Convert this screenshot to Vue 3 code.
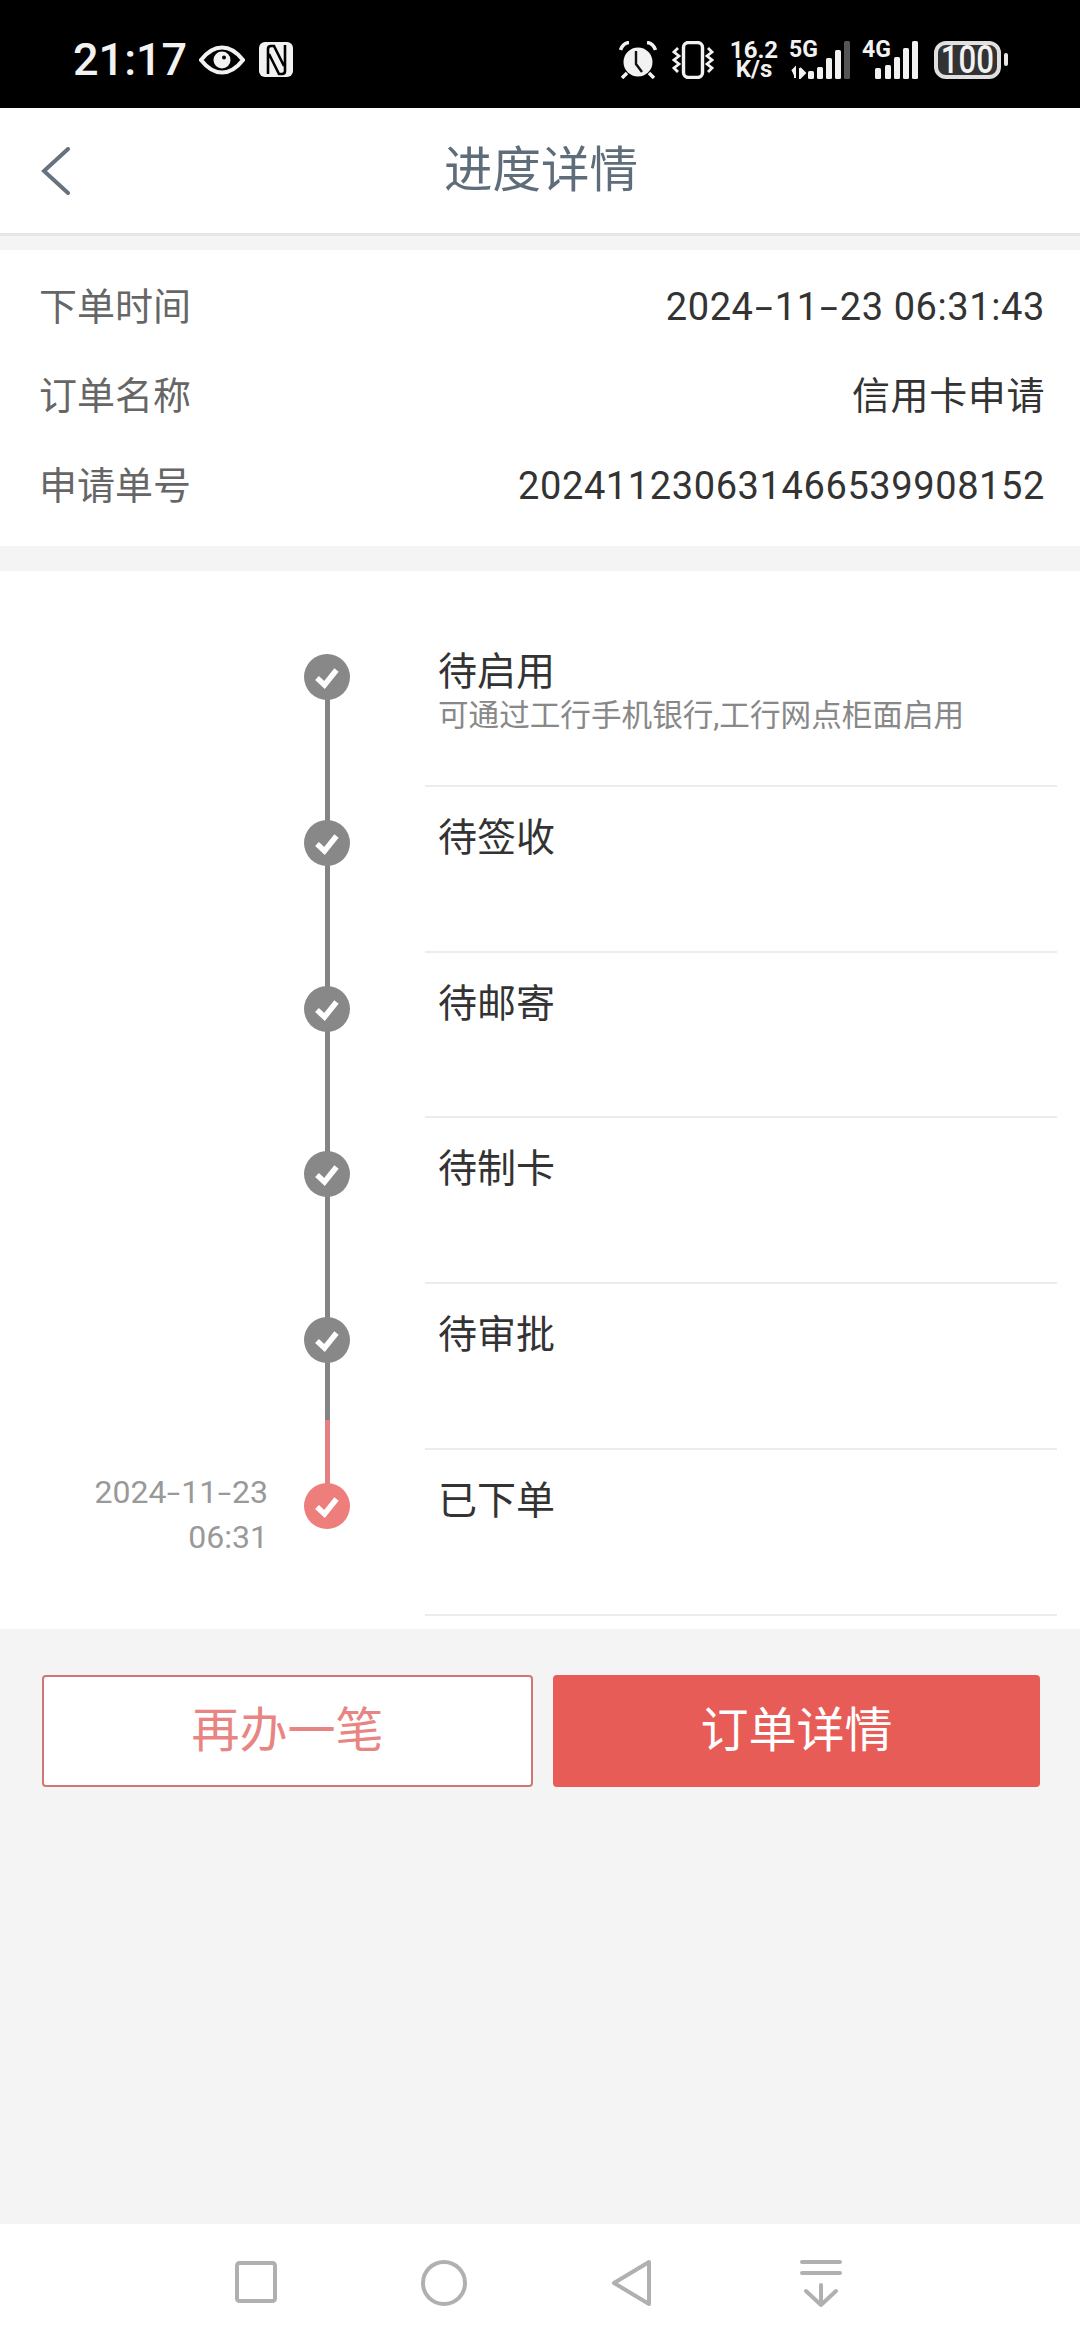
<script setup>
const rows = [
  { title: '待启用', sub: '可通过工行手机银行,工行网点柜面启用' },
  { title: '待签收' },
  { title: '待邮寄' },
  { title: '待制卡' },
  { title: '待审批' },
  { title: '已下单', date: ['2024', '11', '23'], time: '06:31', active: true },
]
const info = [
  { label: '下单时间', parts: ['2024', '11', '23 06:31:43'] },
  { label: '订单名称', parts: ['信用卡申请'] },
  { label: '申请单号', parts: ['202411230631466539908152'] },
]
</script>

<template>
  <div class="page">
    <div class="status">
      <div class="st-left">
        <span class="clock">21:17</span>
        <svg class="eye" width="46" height="30" viewBox="0 0 46 30">
          <path d="M2 15C9 6 15 2.5 23 2.5S37 6 44 15c-7 9-13 12.5-21 12.5S9 24 2 15z" fill="none" stroke="#f2f2f2" stroke-width="4"/>
          <circle cx="23" cy="15" r="8.5" fill="#f2f2f2"/><circle cx="25" cy="12.5" r="2" fill="#000"/>
        </svg>
        <svg class="nfc" width="34" height="35" viewBox="0 0 34 35">
          <rect width="34" height="35" rx="6" fill="#f2f2f2"/>
          <path d="M9 32V7q0-3 3-3h3l10 20M26 3v26q0 3-3 3h-3L10 12" fill="none" stroke="#000" stroke-width="2.6"/>
        </svg>
      </div>
      <div class="st-right">
        <svg width="38" height="38" viewBox="0 0 38 38">
          <circle cx="19" cy="21" r="14.5" fill="#f2f2f2"/>
          <path d="M1.5 9Q4 2 10 1.5M28 1.5Q34 2 36.5 9M8 32l-5 5M30 32l5 5" fill="none" stroke="#f2f2f2" stroke-width="3.5"/>
          <path d="M17 10v13l6 8" fill="none" stroke="#111" stroke-width="2.4"/>
        </svg>
        <svg class="vib" width="42" height="38" viewBox="0 0 42 38">
          <rect x="11.5" y="1.5" width="19" height="35" rx="5" fill="none" stroke="#f2f2f2" stroke-width="3.4"/>
          <path d="M6 7 2 11l5 4-5 4 5 4-5 4 4 4M36 7l4 4-5 4 5 4-5 4 5 4-4 4" fill="none" stroke="#f2f2f2" stroke-width="2.8"/>
        </svg>
        <div class="speed"><div class="sp-line">16.2</div><div class="sp-line">K/s</div></div>
        <div class="sim sim5">
          <span class="gen">5G</span>
          <svg width="61" height="38" viewBox="0 0 61 38" class="bars">
            <path d="M6 27v10M3 30l3-3v10M11 27v10l5-5-5-5" fill="#f2f2f2" stroke="#f2f2f2" stroke-width="2"/>
            <rect x="19" y="30" width="6" height="8" rx="1.5" fill="#f2f2f2"/><rect x="28" y="26" width="6" height="12" rx="1.5" fill="#f2f2f2"/><rect x="37" y="17" width="6" height="21" rx="1.5" fill="#f2f2f2"/><rect x="46" y="9" width="6" height="29" rx="1.5" fill="#f2f2f2"/><rect x="55" y="0" width="6" height="38" rx="1.5" fill="#555"/>
          </svg>
        </div>
        <div class="sim sim4">
          <span class="gen">4G</span>
          <svg width="56" height="38" viewBox="0 0 56 38" class="bars">
            <rect x="13" y="27" width="6" height="11" rx="1.5" fill="#f2f2f2"/><rect x="23" y="24" width="6" height="14" rx="1.5" fill="#f2f2f2"/><rect x="32" y="16" width="6" height="22" rx="1.5" fill="#f2f2f2"/><rect x="41" y="7" width="6" height="31" rx="1.5" fill="#f2f2f2"/><rect x="50" y="0" width="6" height="38" rx="1.5" fill="#f2f2f2"/>
          </svg>
        </div>
        <div class="battery"><span class="bat-body"><span class="bat-num">100</span></span><span class="bat-tip"></span></div>
      </div>
    </div>

    <header class="head">
      <svg class="back" width="30" height="48" viewBox="0 0 30 48">
        <path d="M27 2 3 24l24 22" fill="none" stroke="#66727e" stroke-width="4" stroke-linecap="round"/>
      </svg>
      <h1>进度详情</h1>
    </header>

    <section class="info">
      <div v-for="r in info" :key="r.label" class="info-row">
        <span class="label">{{ r.label }}</span>
        <span class="value"><template v-for="(p, i) in r.parts" :key="i"><span v-if="i" class="dash">-</span>{{ p }}</template></span>
      </div>
    </section>

    <section class="timeline">
      <div v-for="(r, i) in rows" :key="r.title" class="tl-row">
        <div class="tl-date">
          <template v-if="r.date">
            <div><template v-for="(p, j) in r.date" :key="j"><span v-if="j" class="dash-s">-</span>{{ p }}</template></div>
            <div>{{ r.time }}</div>
          </template>
        </div>
        <div class="tl-axis">
          <span v-if="i < rows.length - 1" class="tl-line" :class="{ pinkend: i === rows.length - 2 }"></span>
          <svg class="dot" width="46" height="46" viewBox="0 0 46 46">
            <circle cx="23" cy="23" r="23" :fill="r.active ? '#ee7e7b' : '#888888'"/>
            <path d="M13 24l7.5 7 12-15" fill="none" stroke="#fff" stroke-width="5.5"/>
          </svg>
        </div>
        <div class="tl-body">
          <div class="tl-title">{{ r.title }}</div>
          <div v-if="r.sub" class="tl-sub">{{ r.sub }}</div>
        </div>
      </div>
    </section>

    <div class="actions">
      <button class="btn ghost">再办一笔</button>
      <button class="btn solid">订单详情</button>
    </div>

    <div class="spacer"></div>

    <nav class="navbar">
      <svg width="44" height="44" viewBox="0 0 44 44"><rect x="3" y="3" width="38" height="38" rx="2.5" fill="none" stroke="#b0b0b0" stroke-width="4"/></svg>
      <svg width="48" height="48" viewBox="0 0 48 48"><circle cx="24" cy="24" r="21" fill="none" stroke="#b0b0b0" stroke-width="4"/></svg>
      <svg width="44" height="48" viewBox="0 0 44 48"><path d="M39 3 4 24l35 21z" fill="none" stroke="#b0b0b0" stroke-width="4" stroke-linejoin="round"/></svg>
      <svg width="44" height="48" viewBox="0 0 44 48"><path d="M3 3h38M3 14h38M22 26v20M7 32l15 14 15-14" fill="none" stroke="#b0b0b0" stroke-width="4" stroke-linecap="round"/></svg>
    </nav>
  </div>
</template>

<style>
html, body { margin: 0; padding: 0; }
</style>

<style scoped>
.page {
  width: 1080px; height: 2340px; background: #f4f4f4; display: flex; flex-direction: column;
  font-family: "Roboto", "Noto Sans CJK SC", sans-serif; overflow: hidden;
}
.status { height: 108px; background: #000; display: flex; justify-content: space-between; align-items: center; padding: 11px 72px 0 73px; box-sizing: border-box; flex: none; color: #f2f2f2; }
.st-left { display: flex; align-items: center; }
.clock { font-size: 45px; line-height: 50px; font-weight: 500; width: 126px; white-space: nowrap; }
.nfc { margin-left: 14px; }
.st-right { display: flex; align-items: center; }
.vib { margin-left: 15px; }
.speed { margin-left: 15px; font-size: 24px; font-weight: 700; width: 50px; text-align: center; }
.sp-line { height: 19px; line-height: 19px; }
.sim { position: relative; height: 38px; }
.sim5 { width: 61px; margin-left: 10px; }
.sim4 { width: 56px; margin-left: 12px; }
.gen { position: absolute; left: 0; top: -1px; font-size: 23px; line-height: 20px; font-weight: 700; }
.bars { position: absolute; left: 0; top: 0; }
.battery { display: flex; align-items: center; margin-left: 16px; }
.bat-body { width: 67px; height: 38px; border: 4px solid #e0e0e0; border-radius: 12px; box-sizing: border-box; background: #333; display: flex; align-items: center; justify-content: center; }
.bat-num { font-size: 38px; line-height: 30px; font-weight: 500; color: #f2f2f2; transform: scaleX(.82); }
.bat-tip { width: 4px; height: 13px; background: #e8e8e8; border-radius: 2px; margin-left: 3px; }

.head { height: 128px; background: #fff; border-bottom: 3px solid #e6e6e6; box-sizing: border-box; position: relative; display: flex; align-items: center; justify-content: center; flex: none; }
.back { position: absolute; left: 41px; top: 39px; }
.head h1 { margin: 0; font-size: 48.5px; line-height: 60px; font-weight: 400; color: #5f6c79; transform: translateX(1px); }

.info { margin-top: 14px; height: 296px; background: #fff; padding-top: 12px; box-sizing: border-box; flex: none; }
.info-row { height: 89.6px; display: flex; align-items: center; justify-content: space-between; padding: 0 35px 0 39px; font-size: 38px; line-height: 44px; }
.label { color: #666; }
.value { color: #333; letter-spacing: .6px; }
.dash { display: inline-block; margin: 0 5px; transform: scaleX(1.7); }
.dash-s { display: inline-block; margin: 0 3px; transform: scaleX(1.5); }

.timeline { margin-top: 25px; height: 1058px; background: #fff; padding-top: 50px; box-sizing: border-box; flex: none; }
.tl-row { height: 165.8px; display: flex; position: relative; }
.tl-date { width: 268px; padding-top: 20px; text-align: right; font-size: 32px; line-height: 45px; color: #999; box-sizing: border-box; }
.tl-axis { width: 157px; position: relative; }
.tl-line { position: absolute; left: 57px; top: 56px; width: 5px; height: 166px; background: #848484; }
.pinkend { background: linear-gradient(#848484 0, #848484 48%, #e58080 48%, #e58080 100%); }
.dot { position: absolute; left: 36px; top: 33px; }
.tl-body { width: 632px; border-bottom: 2px solid #ececec; box-sizing: border-box; padding: 0 0 0 13px; }
.tl-title { font-size: 39px; line-height: 44px; color: #333; margin-top: 29px; }
.tl-sub { font-size: 30.6px; line-height: 38px; color: #888; margin-top: 3px; white-space: nowrap; }

.actions { display: flex; gap: 20px; padding: 46px 40px 0 42px; flex: none; }
.btn { flex: 1; height: 112px; border-radius: 4px; font-family: inherit; font-size: 48px; line-height: 60px; box-sizing: border-box; padding: 0; }
.ghost { background: #fff; border: 2px solid #cf7777; color: #e88582; }
.solid { background: #e85c58; border: 0; color: #fff; }

.spacer { flex: 1; }
.navbar { height: 116px; background: #fff; flex: none; position: relative; display: flex; align-items: center; }
.navbar svg { position: absolute; top: 35px; }
.navbar svg:nth-child(1) { left: 234px; top: 36px; }
.navbar svg:nth-child(2) { left: 420px; }
.navbar svg:nth-child(3) { left: 610px; }
.navbar svg:nth-child(4) { left: 799px; }
</style>
